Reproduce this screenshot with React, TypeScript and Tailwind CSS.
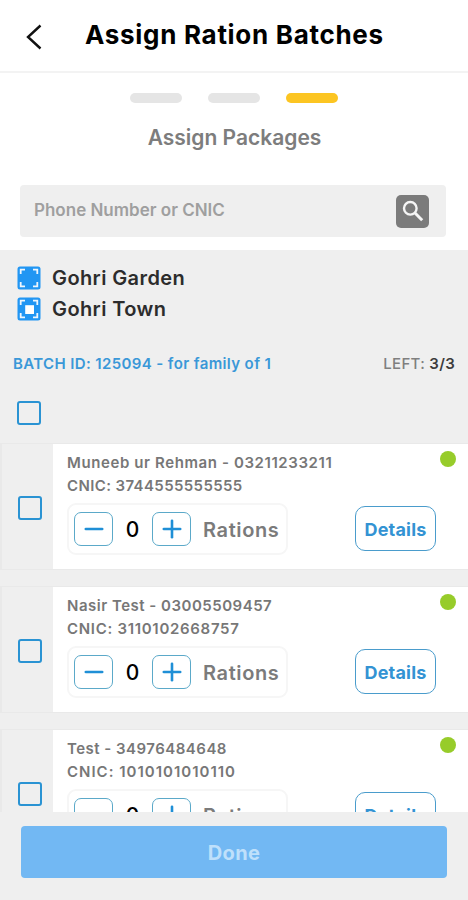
type Person = {
  name: string;
  phone: string;
  cnic: string;
  nameTracking: string;
  cnicTracking: string;
};

const people: Person[] = [
  { name: "Muneeb ur Rehman", phone: "03211233211", cnic: "3744555555555", nameTracking: "tracking-[0.6px]", cnicTracking: "tracking-[0.38px]" },
  { name: "Nasir Test", phone: "03005509457", cnic: "3110102668757", nameTracking: "tracking-[0.5px]", cnicTracking: "tracking-[0.7px]" },
  { name: "Test", phone: "34976484648", cnic: "1010101010110", nameTracking: "tracking-[0.48px]", cnicTracking: "tracking-[1px]" },
];

function FrameIcon({ hollow = false }: { hollow?: boolean }) {
  return (
    <svg className="size-6 shrink-0" viewBox="0 0 24 24" fill="none">
      <rect x="0.5" y="0.5" width="23" height="23" rx="2.5" fill="#2196f3" />
      <path d="M3.7 8V3.7H8M16 3.7h4.3V8M20.3 16v4.3H16M8 20.3H3.7V16" stroke="#eef6fd" strokeWidth="1.8" />
      {hollow && <rect x="8.2" y="8.2" width="8.8" height="8.8" fill="#fff" />}
    </svg>
  );
}

function Checkbox() {
  return <div className="size-6 shrink-0 rounded-[3px] border-2 border-[#2a93d3]" />;
}

function StepButton({ plus = false }: { plus?: boolean }) {
  return (
    <button className="flex h-[34px] w-[39px] items-center justify-center rounded-[7px] border border-[#5ba9c9]">
      <svg className="size-5" viewBox="0 0 20 20" stroke="#1f8fd6" strokeWidth="2.6" strokeLinecap="round">
        <path d="M1.8 10h16.4" />
        {plus && <path d="M10 1.8v16.4" />}
      </svg>
    </button>
  );
}

function Card({ person }: { person: Person }) {
  return (
    <div className="flex h-[127px] shrink-0 border-y border-[#e9e9e9]">
      <div className="flex w-[53px] shrink-0 items-center border-l-2 border-[#e9e9e9] pl-4 pt-[2px]">
        <Checkbox />
      </div>
      <div className="flex min-w-0 grow flex-col bg-white pl-[14px] pr-3 pt-[7px]">
        <div className="flex h-[47px] justify-between">
          <div className="whitespace-nowrap pt-px text-[15px] font-semibold leading-[22.5px] text-[#777]">
            <p className={person.nameTracking}>{person.name} - {person.phone}</p>
            <p className={person.cnicTracking}>CNIC: {person.cnic}</p>
          </div>
          <span className="size-4 rounded-full bg-[#97cc2a]" />
        </div>
        <div className="mt-[5px] flex items-center justify-between pr-5">
          <div className="flex h-[52px] w-[221px] items-center rounded-[9px] border-2 border-[#f6f6f6] pl-[5px]">
            <StepButton />
            <span className="w-[39px] pt-[2px] text-center text-[21px] font-medium text-black">0</span>
            <StepButton plus />
            <span className="ml-3 pt-[2px] text-[20px] font-semibold tracking-[0.6px] text-[#7b7b7b]">Rations</span>
          </div>
          <button className="mb-px h-[45px] w-[81px] whitespace-nowrap rounded-[10px] border border-[#4a9ccc] pt-[2px] text-[18px] font-bold tracking-[0.2px] text-[#3393d3]">
            Details
          </button>
        </div>
      </div>
    </div>
  );
}

export default function App() {
  return (
    <div className="flex h-[900px] w-[468px] flex-col overflow-hidden bg-[#efefef] font-['Inter',sans-serif]">
      <header className="flex h-[73px] shrink-0 items-center border-b-2 border-[#f3f3f3] bg-white pl-[26px]">
        <svg className="mt-[2px] h-[26px] w-4 shrink-0" viewBox="0 0 16 26" fill="none" stroke="#111" strokeWidth="2.4">
          <path d="M14.5 1.5L2 13l12.5 11.5" />
        </svg>
        <h1 className="mb-[3px] ml-[43px] whitespace-nowrap text-[26px] font-bold tracking-[0.7px] text-black">Assign Ration Batches</h1>
      </header>

      <section className="flex h-[177px] shrink-0 flex-col items-center bg-white">
        <div className="mt-5 flex gap-[26px]">
          <span className="h-[10px] w-[52px] rounded-full bg-[#e5e5e5]" />
          <span className="h-[10px] w-[52px] rounded-full bg-[#e5e5e5]" />
          <span className="h-[10px] w-[52px] rounded-full bg-[#fcc522]" />
        </div>
        <h2 className="mt-[20px] whitespace-nowrap pl-[1px] text-[21px] font-semibold leading-[30px] text-[#7d7d7d]">Assign Packages</h2>
        <div className="mr-[2px] mt-[32px] flex h-[52px] w-[426px] items-center justify-between rounded-[4px] bg-[#efefef] pl-[14px] pr-[17px]">
          <span className="text-[17px] font-semibold text-[#9f9f9f]">Phone Number or CNIC</span>
          <span className="flex size-[33px] items-center justify-center rounded-[5px] bg-[#7b7b7b]">
            <svg className="size-[22px]" viewBox="0 0 22 22" fill="none" stroke="#f5f5f5">
              <circle cx="8.3" cy="8.3" r="6.3" strokeWidth="2.4" />
              <path d="M13 13l7.2 7.2" strokeWidth="3" />
            </svg>
          </span>
        </div>
      </section>

      <main className="flex min-h-0 grow flex-col overflow-hidden">
        <div className="flex shrink-0 flex-col gap-[7px] pl-[17px] pt-4 text-[20px] font-semibold leading-6 tracking-[0.4px] text-[#2c2c2c]">
          <div className="flex gap-[11px]"><FrameIcon />Gohri Garden</div>
          <div className="flex gap-[11px]"><FrameIcon hollow />Gohri Town</div>
        </div>
        <div className="mt-[30px] flex h-[24px] shrink-0 items-center justify-between whitespace-nowrap px-[13px] pt-[2px] text-[15px]">
          <span className="font-semibold tracking-[0.38px] text-[#3a98d8]">BATCH ID: 125094 - for family of 1</span>
          <span className="font-medium tracking-[0.3px] text-[#7f7f7f]">LEFT: <span className="font-semibold text-[#3c3c3c]">3/3</span></span>
        </div>
        <div className="mt-[26px] shrink-0 pl-[17px]"><Checkbox /></div>
        <div className="mt-[18px] flex shrink-0 flex-col gap-4">
          {people.map((person) => <Card key={person.cnic} person={person} />)}
        </div>
      </main>

      <footer className="flex h-[88px] shrink-0 justify-center bg-[#efefef] pt-[14px]">
        <button className="h-[52px] w-[426px] rounded-[4px] bg-[#72b8f3] pt-[2px] text-[20px] font-bold tracking-[0.3px] text-[#bfe0fb]">Done</button>
      </footer>
    </div>
  );
}
